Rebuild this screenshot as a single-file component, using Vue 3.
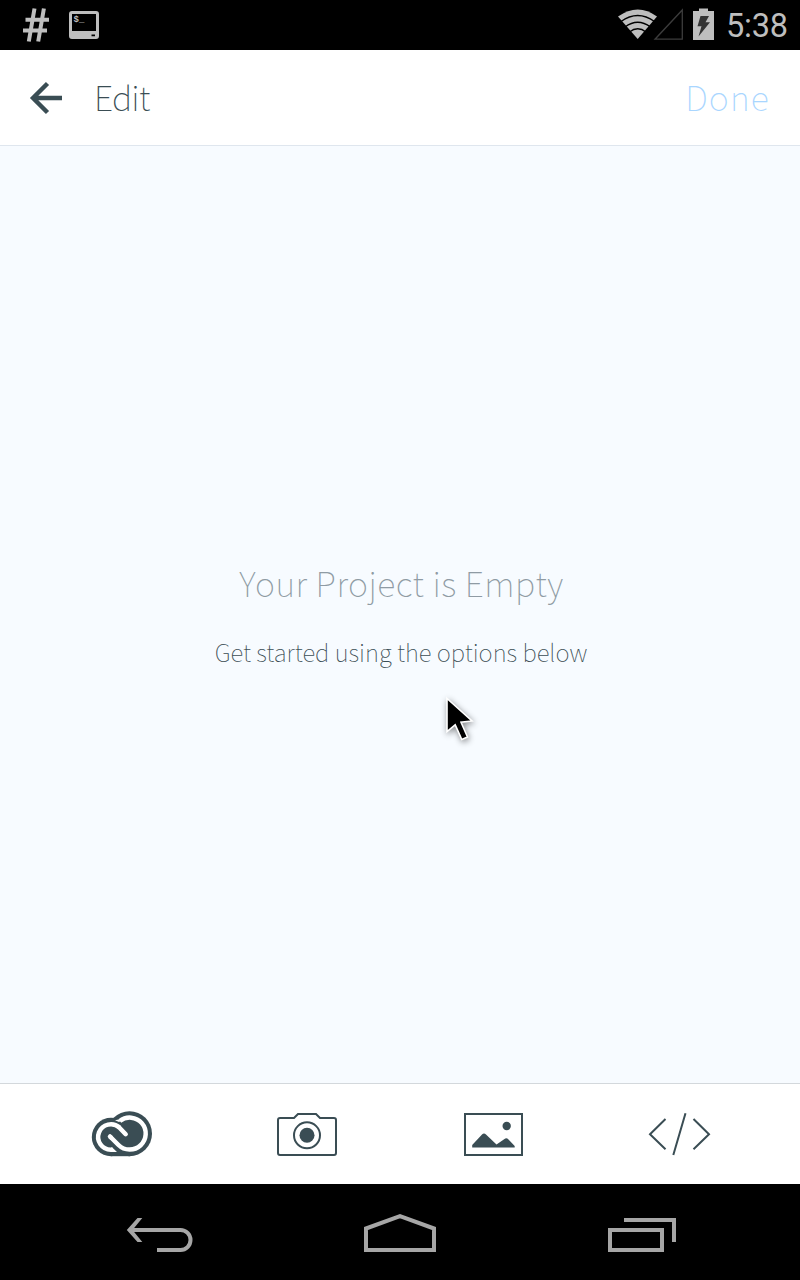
<script setup>
const title = 'Edit'
const action = 'Done'
</script>

<template>
  <div class="screen">
    <header class="status">
      <svg class="status-left" width="120" height="50" viewBox="0 0 120 50">
        <g fill="none" stroke="#bebebe" stroke-width="4">
          <path d="M34.500 8.500L28.800 41.500M43.900 8.500L38.200 41.500M25.500 19.800H49M23 30.400H47" />
        </g>
        <path fill="#bebebe" fill-rule="evenodd" d="M72 11H96Q99 11 99 14V36Q99 39 96 39H72Q69 39 69 36V14Q69 11 72 11ZM72 14V31H96V14ZM91.500 34.500V36.300H95V34.500Z" />
        <text x="73.500" y="22" class="prompt">$_</text>
      </svg>
      <div class="status-right">
        <svg width="120" height="50" viewBox="600 0 120 50">
          <path fill="#bebebe" d="M618 16.500Q638 2.500 657 16.500L637.700 39Z" />
          <g fill="none" stroke="#000" stroke-width="1.500">
            <path d="M621 21.500Q637.700 9.500 654.500 21.500M625 27Q637.700 17.500 650.500 27M629.500 32Q637.700 25.500 646 32" />
          </g>
          <path d="M655 39.200H682.300V10Z" fill="none" stroke="#3c3c3c" stroke-width="1.300" />
          <path d="M699 8.500H708V11H714V40H693V11H699Z" fill="#bebebe" />
          <path d="M700.500 16H709L705.500 22.300H710L698.500 36.500L701.500 26.300H697.500Z" fill="#333" />
        </svg>
        <span class="clock">5:38</span>
      </div>
    </header>

    <nav class="bar">
      <svg width="34" height="34" viewBox="29 81 34 34" fill="none" stroke="#3a4d54" stroke-width="4.400">
        <path d="M62 98H33M47.500 83.500L33 98L47.500 112.500" />
      </svg>
      <span class="title">{{ title }}</span>
      <span class="done">{{ action }}</span>
    </nav>

    <main class="empty">
      <h1>Your Project is Empty</h1>
      <p>Get started using the options below</p>
      <svg class="cursor" width="50" height="60" viewBox="435 690 50 60">
        <path d="M447 698.500V731.500L455.200 724.800L461.800 739.500L467.500 737L461 722.200L472 721Z" fill="#000" stroke="#fff" stroke-width="1.600" />
      </svg>
    </main>

    <footer class="tools">
      <svg width="62" height="48" viewBox="91 1110 62 48">
        <g fill="#3a4d54">
          <circle cx="111" cy="1137" r="19.200" />
          <circle cx="129.500" cy="1133.700" r="22.500" />
          <path d="M111 1140H130V1156.200H111Z" />
        </g>
        <path d="M111 1147.500H112.300L117 1152H111ZM115 1120.200L118.500 1119.500L121 1121L119 1122Z" fill="#fff" />
        <g fill="none" stroke="#fff" stroke-width="4.500">
          <path d="M112.500 1149.700H111A12.700 12.700 0 1 1 119.500 1127.700" />
          <path d="M119 1127.200L125.700 1134.200" stroke-linecap="round" />
          <path d="M110 1136.500L111 1137.500" stroke-linecap="round" />
          <path d="M110 1136.500L118.500 1145A16 16 0 1 0 119.800 1121" />
        </g>
      </svg>
      <svg width="62" height="48" viewBox="277 1110 62 48" fill="none" stroke="#3a4d54" stroke-width="2">
        <path d="M280 1118H294L298 1114H316L320 1118H334Q336 1118 336 1120V1153Q336 1155 334 1155H280Q278 1155 278 1153V1120Q278 1118 280 1118Z" />
        <circle cx="307" cy="1135.300" r="13" />
        <circle cx="307" cy="1135.300" r="7.500" fill="#3a4d54" stroke="none" />
      </svg>
      <svg width="62" height="48" viewBox="462 1110 62 48">
        <path d="M465 1114H522V1155H465Z" fill="none" stroke="#3a4d54" stroke-width="2" />
        <circle cx="506.700" cy="1126" r="4.200" fill="#3a4d54" />
        <path d="M472.200 1147.500V1145L482 1134.500Q484 1132.500 486 1134.500L496.500 1144.500L504.500 1139Q506.500 1137.500 508.500 1139.500L514.700 1146V1147.500Z" fill="#3a4d54" />
      </svg>
      <svg width="62" height="48" viewBox="648 1110 62 48" fill="none" stroke="#3a4d54" stroke-width="2">
        <path d="M665.500 1119L650 1134.200L665.500 1149.300M685.500 1113.300L673.300 1155M693.500 1119L709 1134.200L693.500 1149.300" />
      </svg>
    </footer>

    <div class="system">
      <svg width="70" height="40" viewBox="125 1212 70 40" fill="none" stroke="#a6a6a6" stroke-width="4">
        <path d="M130 1230H180.500A10 10 0 0 1 180.500 1250H157" />
        <path d="M137.500 1218H142.300L132.500 1230L142.300 1242H137.500L126.800 1230Z" fill="#a6a6a6" stroke="none" />
      </svg>
      <svg width="74" height="40" viewBox="364 1212 74 40" fill="none" stroke="#a6a6a6" stroke-width="4">
        <path d="M366 1250V1228.500L400 1216.200L434 1228.500V1250Z" />
      </svg>
      <svg width="70" height="40" viewBox="607 1212 70 40" fill="none" stroke="#a6a6a6" stroke-width="4">
        <path d="M610 1230H662V1250H610ZM624 1220H674V1242" />
      </svg>
    </div>
  </div>
</template>

<style>
body { margin: 0; }
</style>

<style scoped>
.screen {
  width: 800px;
  height: 1280px;
  display: flex;
  flex-direction: column;
  background: #f7fbff;
  color: #3a4d54;
  font-family: "Noto Sans CJK SC", "Noto Sans CJK JP", sans-serif;
  overflow: hidden;
}
svg { display: block; flex: none; overflow: visible; }
.status { height: 50px; background: #000; display: flex; justify-content: space-between; }
.status-right { display: flex; width: 200px; }
.clock { margin-left: 6px; font: 32.500px/53px Roboto, sans-serif; color: #bebebe; white-space: nowrap; letter-spacing: -0.200px; }
.prompt { font: bold 9px "Liberation Mono", monospace; fill: #bebebe; }
.bar {
  height: 95px;
  display: flex;
  align-items: center;
  padding: 0 30px 0 29px;
  background: #fff;
  border-bottom: 1px solid #dfe6ee;
  font-size: 34px;
  font-weight: 100;
  line-height: 48px;
}
.title, .done { padding-bottom: 2px; }
.title { margin-left: 31px; letter-spacing: -0.800px; }
.done { margin-left: auto; color: #a9d6ff; letter-spacing: 1.200px; }
.empty { flex: 1; display: flex; flex-direction: column; align-items: center; }
h1 { margin: 412px 0 0; padding-left: 3px; font-size: 34px; line-height: 50px; font-weight: 100; letter-spacing: 0.500px; color: #8f9ba4; }
p { margin: 24px 0 0; padding-left: 2px; font-size: 24px; line-height: 40px; font-weight: 100; }
.cursor { margin: 18px 0 0 120px; filter: drop-shadow(1px 2px 3px rgba(0, 0, 0, 0.45)); }
.tools {
  height: 100px;
  border-top: 1px solid #d3d8dc;
  background: #fff;
  display: flex;
  justify-content: space-between;
  align-items: center;
  padding: 0 90px 0 91px;
}
.system {
  height: 96px;
  background: #000;
  display: flex;
  justify-content: space-between;
  align-items: center;
  padding: 0 123px 0 125px;
}
</style>
